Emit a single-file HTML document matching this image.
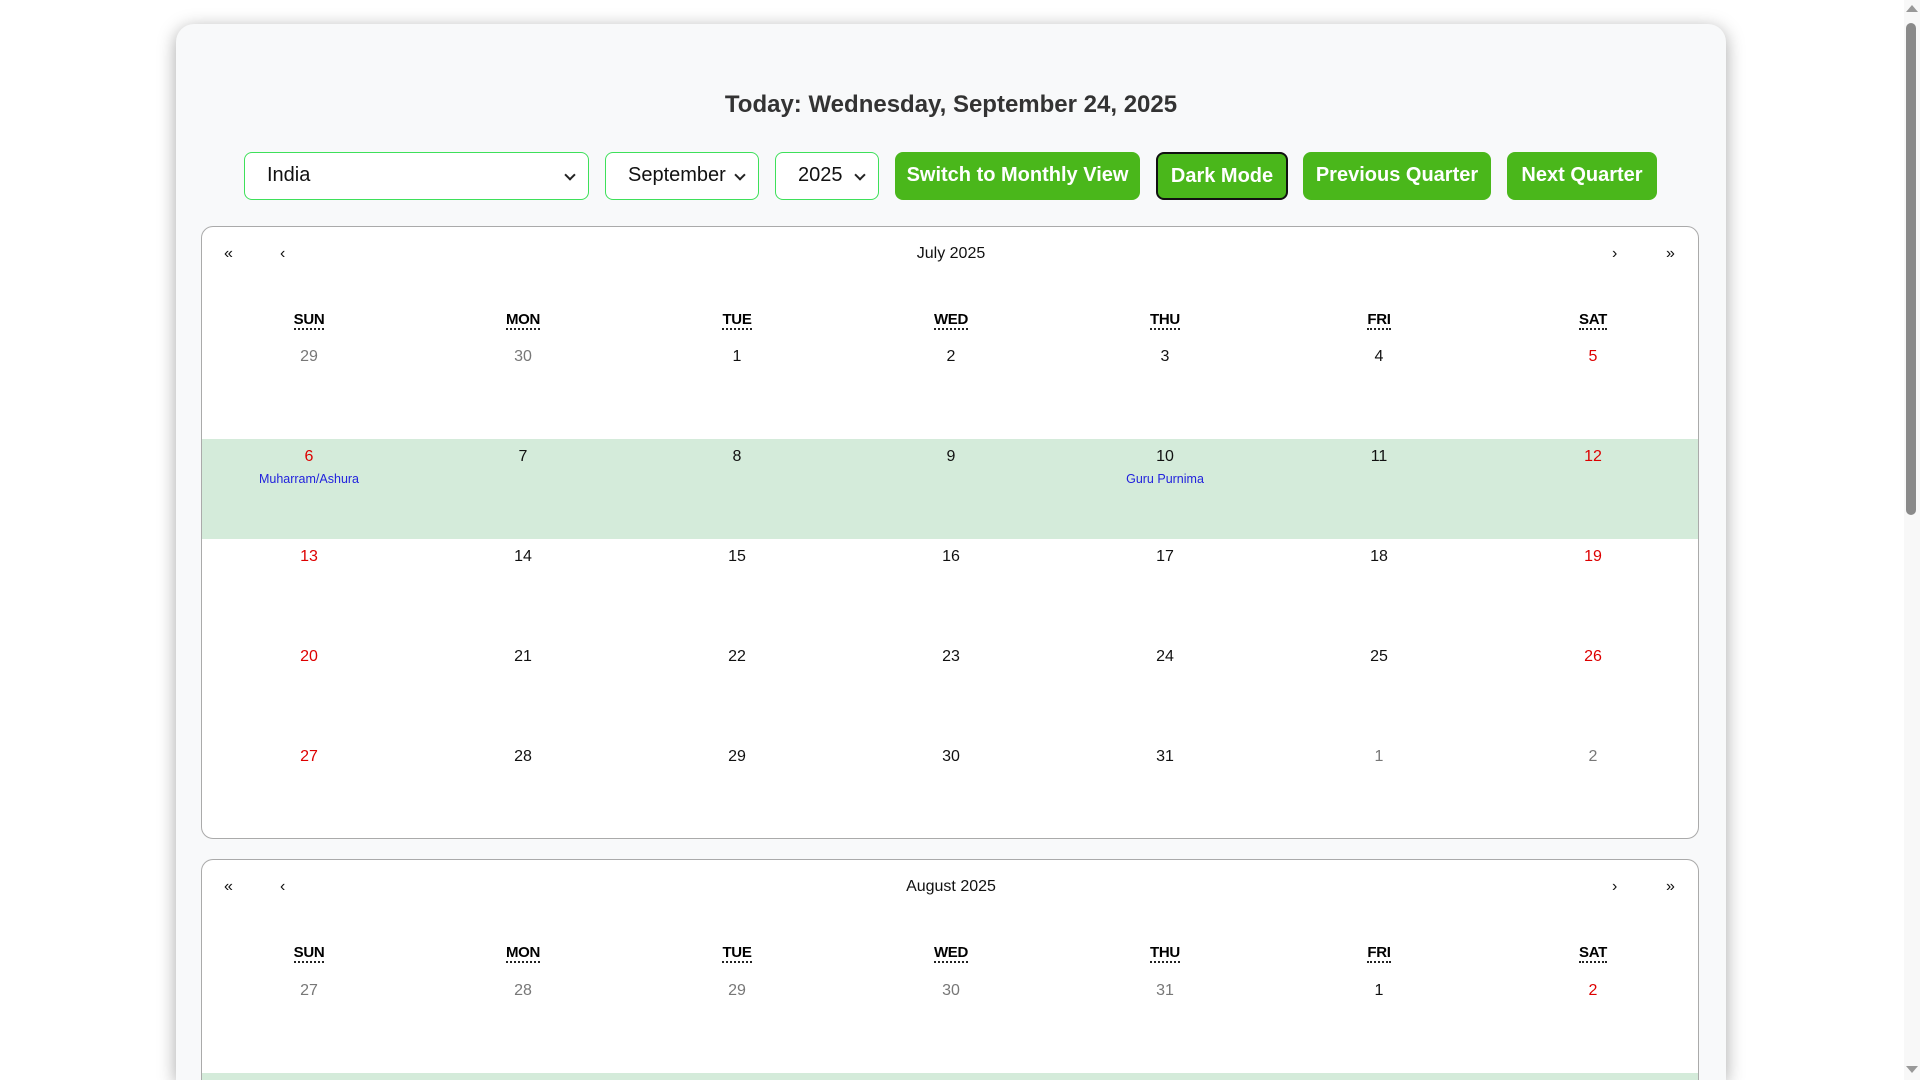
<!DOCTYPE html>
<html><head><meta charset="utf-8"><style>
*{box-sizing:border-box;margin:0;padding:0}
html,body{width:1920px;height:1080px;overflow:hidden;background:#fff;font-family:"Liberation Sans",Arial,sans-serif}
#w{position:relative;width:1920px;height:1080px;overflow:hidden}
.card{position:absolute;left:176px;top:24px;width:1550px;height:1056px;background:#f8f9fa;border-radius:18px 18px 0 0;box-shadow:0 4px 18px rgba(0,0,0,.35)}
h1{position:absolute;left:176px;width:1550px;top:91px;text-align:center;font-size:24px;font-weight:bold;color:#333}
.ctl{position:absolute;top:152px;height:48px;font-size:20px}
.sel{border:1.5px solid #3ee05a;border-radius:8px;background:#fff;color:#111;padding-left:22px;line-height:45px}
.sel:after{content:"";position:absolute;right:14px;top:18px;width:6px;height:6px;border-right:2px solid #222;border-bottom:2px solid #222;transform:rotate(45deg)}
.btn{background:#4ab71b;color:#fff;font-weight:bold;border-radius:8px;text-align:center;line-height:47px}
.cal{position:absolute;left:201px;width:1498px;background:#fff;border:1.5px solid #aaa;border-radius:12px;overflow:hidden}
.nav{position:absolute;top:18px;font-size:16px;color:#111}
.hd{position:absolute;top:84px;width:214px;text-align:center;font-size:15px;font-weight:bold;letter-spacing:-0.3px}
.hd span{border-bottom:2px dotted #222}
.row{position:absolute;left:0;width:1498px;height:100px}
.c{position:absolute;top:9px;width:214px;text-align:center;font-size:16px;color:#111}
.c.g{color:#777}.c.r{color:#d00}
.c i{display:block;font-style:normal;font-size:12.5px;color:#2222dd;margin-top:6px}
.band{background:#d4ebda}
</style></head><body><div id="w">
<div class="card"></div>
<h1>Today: Wednesday, September 24, 2025</h1>
<div class="ctl sel" style="left:244px;width:345px">India</div>
<div class="ctl sel" style="left:605px;width:154px">September</div>
<div class="ctl sel" style="left:775px;width:104px">2025</div>
<div class="ctl btn" style="left:895px;width:245px">Switch to Monthly View</div>
<div class="ctl btn" style="left:1156px;width:132px;border:2px solid #111;line-height:44px">Dark Mode</div>
<div class="ctl btn" style="left:1303px;width:188px">Previous Quarter</div>
<div class="ctl btn" style="left:1507px;width:150px">Next Quarter</div>

<div class="cal" style="top:226px;height:613px">
<div class="nav" style="left:22px">«</div><div class="nav" style="left:78px">‹</div>
<div class="nav" style="left:0;width:1498px;text-align:center">July 2025</div>
<div class="nav" style="left:1410px">›</div><div class="nav" style="left:1464px">»</div>
<div class="hd" style="left:0"><span>SUN</span></div><div class="hd" style="left:214px"><span>MON</span></div><div class="hd" style="left:428px"><span>TUE</span></div><div class="hd" style="left:642px"><span>WED</span></div><div class="hd" style="left:856px"><span>THU</span></div><div class="hd" style="left:1070px"><span>FRI</span></div><div class="hd" style="left:1284px"><span>SAT</span></div>
<div class="row" style="top:112px"><div class="c g" style="left:0">29</div><div class="c g" style="left:214px">30</div><div class="c" style="left:428px">1</div><div class="c" style="left:642px">2</div><div class="c" style="left:856px">3</div><div class="c" style="left:1070px">4</div><div class="c r" style="left:1284px">5</div></div>
<div class="row band" style="top:212px"><div class="c r" style="left:0">6<i>Muharram/Ashura</i></div><div class="c" style="left:214px">7</div><div class="c" style="left:428px">8</div><div class="c" style="left:642px">9</div><div class="c" style="left:856px">10<i>Guru Purnima</i></div><div class="c" style="left:1070px">11</div><div class="c r" style="left:1284px">12</div></div>
<div class="row" style="top:312px"><div class="c r" style="left:0">13</div><div class="c" style="left:214px">14</div><div class="c" style="left:428px">15</div><div class="c" style="left:642px">16</div><div class="c" style="left:856px">17</div><div class="c" style="left:1070px">18</div><div class="c r" style="left:1284px">19</div></div>
<div class="row" style="top:412px"><div class="c r" style="left:0">20</div><div class="c" style="left:214px">21</div><div class="c" style="left:428px">22</div><div class="c" style="left:642px">23</div><div class="c" style="left:856px">24</div><div class="c" style="left:1070px">25</div><div class="c r" style="left:1284px">26</div></div>
<div class="row" style="top:512px"><div class="c r" style="left:0">27</div><div class="c" style="left:214px">28</div><div class="c" style="left:428px">29</div><div class="c" style="left:642px">30</div><div class="c" style="left:856px">31</div><div class="c g" style="left:1070px">1</div><div class="c g" style="left:1284px">2</div></div>
</div>

<div class="cal" style="top:859px;height:221px;border-bottom:none;border-radius:12px 12px 0 0">
<div class="nav" style="left:22px">«</div><div class="nav" style="left:78px">‹</div>
<div class="nav" style="left:0;width:1498px;text-align:center">August 2025</div>
<div class="nav" style="left:1410px">›</div><div class="nav" style="left:1464px">»</div>
<div class="hd" style="left:0"><span>SUN</span></div><div class="hd" style="left:214px"><span>MON</span></div><div class="hd" style="left:428px"><span>TUE</span></div><div class="hd" style="left:642px"><span>WED</span></div><div class="hd" style="left:856px"><span>THU</span></div><div class="hd" style="left:1070px"><span>FRI</span></div><div class="hd" style="left:1284px"><span>SAT</span></div>
<div class="row" style="top:113px"><div class="c g" style="left:0">27</div><div class="c g" style="left:214px">28</div><div class="c g" style="left:428px">29</div><div class="c g" style="left:642px">30</div><div class="c g" style="left:856px">31</div><div class="c" style="left:1070px">1</div><div class="c r" style="left:1284px">2</div></div>
<div class="row band" style="top:213px;height:8px"></div>
</div>

<div style="position:absolute;left:1904px;top:0;width:16px;height:1080px;background:#f8f8f8"></div>
<div style="position:absolute;left:1906px;top:23px;width:10px;height:492px;background:#8a8a8a;border-radius:5px"></div>
<div style="position:absolute;left:1906px;top:5px;width:0;height:0;border-left:6px solid transparent;border-right:6px solid transparent;border-bottom:7px solid #999"></div>
<div style="position:absolute;left:1906px;top:1066px;width:0;height:0;border-left:6px solid transparent;border-right:6px solid transparent;border-top:7px solid #999"></div>
</div></body></html>
